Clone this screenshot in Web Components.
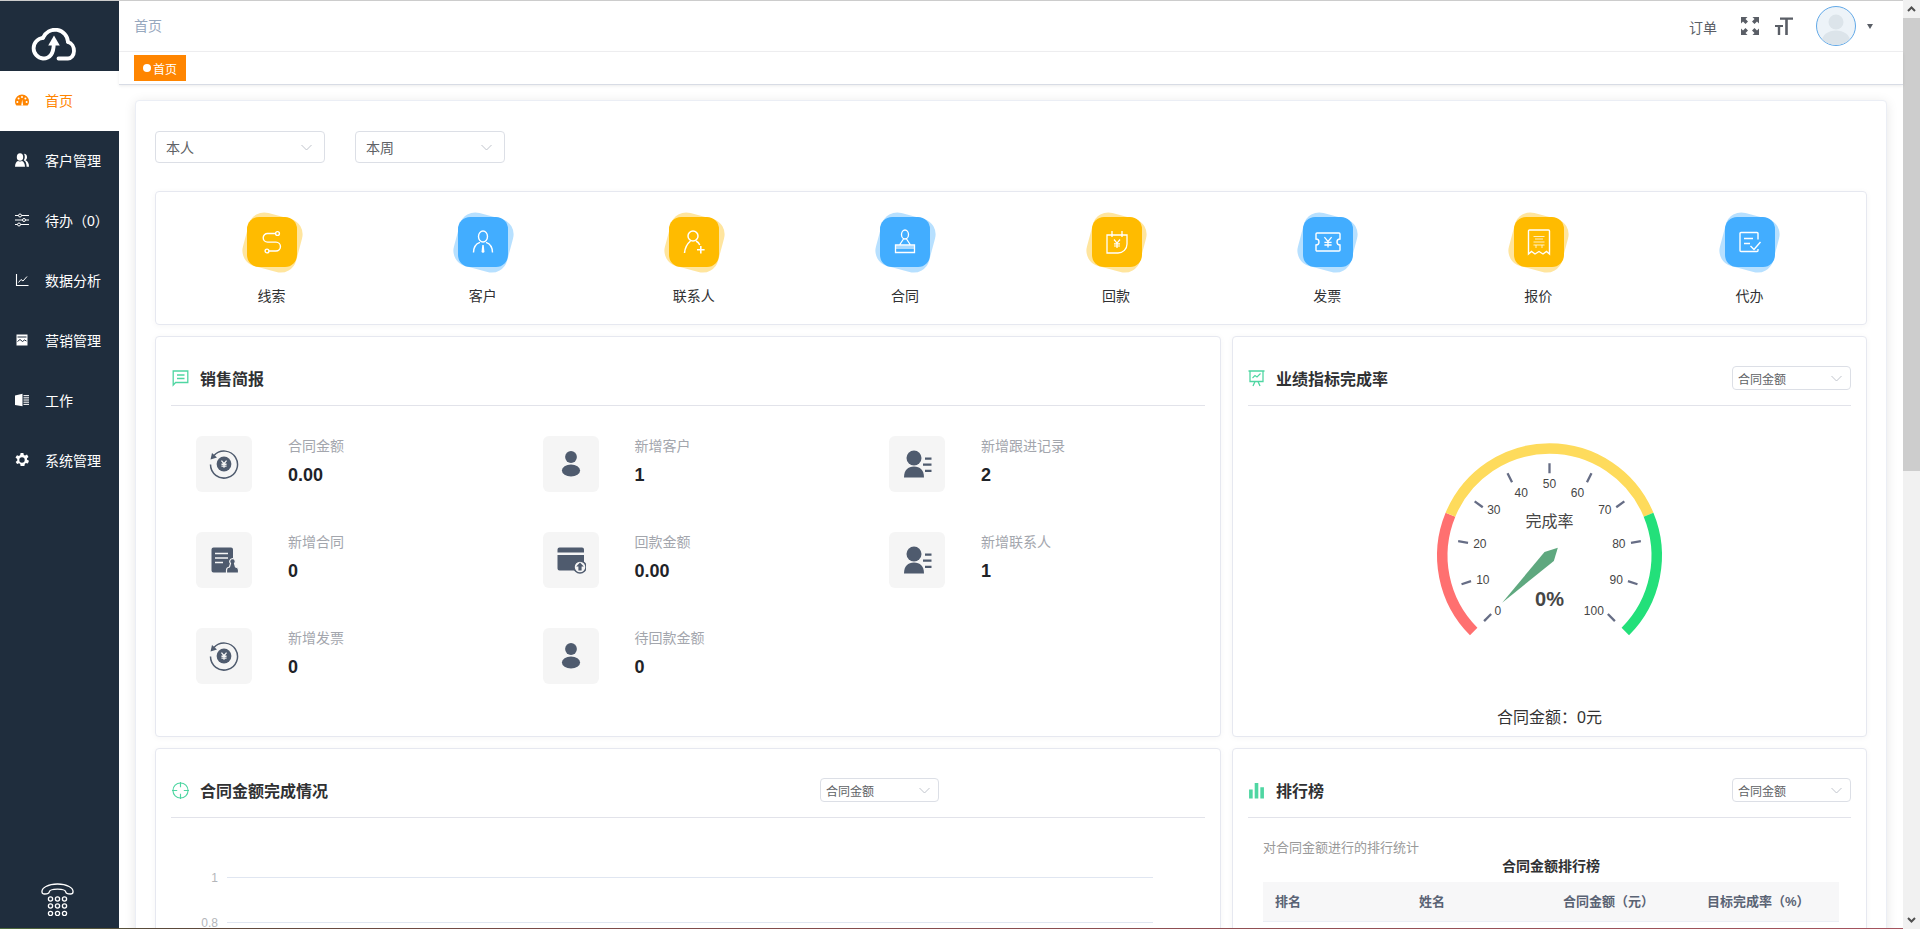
<!DOCTYPE html>
<html lang="zh-CN">
<head>
<meta charset="utf-8">
<title>首页</title>
<style>
html,body{margin:0;padding:0;height:100%;overflow:hidden;background:#fff;font-family:"Liberation Sans","Noto Sans CJK SC",sans-serif;}
</style>
</head>
<body>
<x-app></x-app>
<script>
const YEN = (cx,cy,s,c,w)=>`<path fill="none" stroke="${c}" stroke-width="${w}" d="M${cx-3*s} ${cy-4*s}L${cx} ${cy-.4*s}L${cx+3*s} ${cy-4*s}M${cx} ${cy-.4*s}V${cy+4.5*s}M${cx-3*s} ${cy+.3*s}H${cx+3*s}M${cx-3*s} ${cy+2.5*s}H${cx+3*s}"/>`;
const ICONS = {
  gauge:[14,`<path fill="currentColor" d="M7 1.5A7 7 0 0 0 0 8.5c0 1.6.6 3 1.4 4h11.2c.8-1 1.4-2.4 1.4-4a7 7 0 0 0-7-7z"/><g fill="#fff"><circle cx="7" cy="4" r="1"/><circle cx="3.6" cy="5.6" r="1"/><circle cx="10.4" cy="5.6" r="1"/><circle cx="2.4" cy="9" r="1"/><circle cx="11.6" cy="9" r="1"/><path d="M6.2 12.5L7.2 6.5 8.2 12.5z"/></g>`],
  people:[14,`<g fill="currentColor"><ellipse cx="5" cy="4" rx="3.2" ry="3.8"/><path d="M0 13.8c0-3.4 1.600-5.400 3-5.800.8.500 3.200.500 4 0 1.400.4 3 2.400 3 5.800z"/><path d="M9 .8c2 0 3 1.600 3 3.400 0 1.300-.6 2.500-1.500 3.100 2 .8 3.500 3 3.500 6.500h-2.400c0-2.900-.8-5.300-2.800-6.500 1.300-1.800 1.300-4.700.2-6.500z"/></g>`],
  sliders:[14,`<g fill="none" stroke="currentColor" stroke-width="1"><path d="M0 2.500h3.500M6.500 2.500H14M0 7h7.500M10.500 7H14M0 11.500h2.500M5.500 11.500H14"/><circle cx="5" cy="2.500" r="1.500"/><circle cx="9" cy="7" r="1.500"/><circle cx="4" cy="11.500" r="1.500"/></g>`],
  chart:[14,`<g fill="none" stroke="currentColor"><path d="M1.500 1v11.500H13.500" stroke-width="1.100"/><path d="M3.500 9.500L6 6.500l2 1.500L12 3.500" stroke-width="1"/></g>`],
  picture:[14,`<path fill="currentColor" d="M1.500 1.500h11v11h-11z"/><path fill="none" stroke="#1f2d3d" stroke-width="1" d="M2.500 4h9M2.500 8.500l2.500-2 2.500 2 2-1.500 2 1"/>`],
  book:[14,`<path fill="currentColor" d="M0 2.500L7.500.8v12.400L0 12z"/><path fill="none" stroke="currentColor" stroke-width=".9" d="M8.500 2.500H14M8.500 4.300H14M8.500 6.100H14M8.500 7.900H14M8.500 9.700H14M8.500 11.500H14"/>`],
  gear:[14,`<path fill="currentColor" fill-rule="evenodd" d="M5.600 0h2.800l.4 2 1.300.6L12 1.500l1.500 2.400L12 5.300l.1 1.500 1.900 1-1.100 2.600-2.100-.5-1 1-.4 2.100H5.600l-.4-2.100-1.100-.6-2 .8L.7 8.900l1.600-1.400-.1-1.500L.5 4.600 2 2.200l2 .8 1.200-.9zM7 4.300A2.700 2.700 0 1 0 7 9.700 2.700 2.700 0 0 0 7 4.300z"/>`],
  phone:[33,`<g fill="none" stroke="currentColor" stroke-width="1.300"><path d="M1 9c-.6-4 6-8 15.500-8S32.600 5 32 9c0 1.400-1 2-2.500 2-2.500 0-4.500-.2-4.700-1.800-.2-1.600-2-3-8.300-3s-8.100 1.400-8.300 3C8 10.800 6 11 3.500 11 2 11 1 10.400 1 9z"/><circle cx="9.500" cy="16" r="2.100"/><circle cx="16.500" cy="16" r="2.100"/><circle cx="23.500" cy="16" r="2.100"/><circle cx="9.500" cy="23" r="2.100"/><circle cx="16.500" cy="23" r="2.100"/><circle cx="23.500" cy="23" r="2.100"/><circle cx="9.500" cy="30.500" r="2.100"/><circle cx="16.500" cy="30.500" r="2.100"/><circle cx="23.500" cy="30.500" r="2.100"/></g>`],
  full:[18,`<g fill="currentColor"><path d="M0 0h6.500L4.500 2 7 4.500 4.500 7 2 4.500 0 6.500z"/><path d="M18 0h-6.500l2 2L11 4.500 13.500 7 16 4.500l2 2z"/><path d="M0 18h6.500l-2-2L7 13.500 4.500 11 2 13.500 0 11.500z"/><path d="M18 18h-6.500l2-2-2.500-2.500L13.500 11 16 13.500l2-2z"/></g>`],
  tt:[18,`<path fill="currentColor" d="M5 .5h13v2.200h-5.200V18h-2.600V2.700H5zM0 8h8v2H5.200v8H2.800v-8H0z"/>`],
  msg:[17,`<g fill="none" stroke="currentColor" stroke-width="1.300"><path d="M1.200 1h14.600v11.500H3.600l-2.400 2.600z"/><path d="M5 5h7.500M5 8.500h7.500"/></g>`],
  board:[17,`<g fill="none" stroke="currentColor" stroke-width="1.300"><path d="M.5 1h16M2 1v10.500h13V1"/><path d="M4.500 8L7 5.500l2 1.500 3.500-3.500" stroke-width="1.100"/><path d="M7 11.500L5 16M10 11.500l2 4.500"/></g>`],
  target:[18,`<g fill="none" stroke="currentColor" stroke-width="1.200"><circle cx="9" cy="9" r="8"/><path d="M9 0v5.500M9 12.500V18M0 9h5.500M12.500 9H18"/></g>`],
  bars:[16,`<g fill="currentColor"><path d="M1 7h3.400v8.500H1zM6.300 1h3.400v14.500H6.300zM11.600 5h3.400v10.500h-3.400z"/></g>`],
  q_line:[28,`<g fill="none" stroke="currentColor" stroke-width="1.400"><circle cx="19.500" cy="5.500" r="1.900"/><circle cx="9" cy="23" r="1.900"/><path d="M17.600 5.500H9.500a4.300 4.300 0 0 0 0 8.600h8.500a4.200 4.200 0 0 1 0 8.900h-7"/></g>`],
  q_cust:[28,`<g fill="none" stroke="currentColor" stroke-width="1.400"><ellipse cx="14" cy="8.500" rx="4.500" ry="5.500"/><path d="M4.500 24.500C4.500 19 7.500 15.500 11 14.300M23.500 24.500C23.500 19 20.500 15.500 17 14.300"/></g><path fill="currentColor" d="M13.300 17h1.400l.8 7-1.500 1-1.500-1z"/>`],
  q_cont:[28,`<g fill="none" stroke="currentColor" stroke-width="1.500"><circle cx="13" cy="8" r="5"/><path d="M4.500 25C5 19.500 7.500 15.500 10.500 13M16 13c1.800 1 3 2.300 3.800 4"/></g><path fill="currentColor" d="M20 18h1.600v3h3v1.600h-3v3H20v-3h-3V21h3z"/>`],
  q_stamp:[28,`<g fill="none" stroke="currentColor" stroke-width="1.300"><ellipse cx="14" cy="6.500" rx="3.500" ry="4.500"/><path d="M12.500 11L8.500 17M15.500 11L19.500 17M4.500 17h19v7.500h-19z"/></g><path fill="currentColor" fill-opacity=".55" d="M5 17.500h18v3.500H5z"/>`],
  q_cal:[28,`<g fill="none" stroke="currentColor" stroke-width="1.300"><path d="M4 7H24V16C24 21 20 25 15 25H4z"/><path d="M9 3v6M19 3v6"/></g>${YEN(14,15.500,1,'currentColor',1.200)}`],
  q_ticket:[28,`<path fill="none" stroke="currentColor" stroke-width="1.400" d="M3 5H25a1 1 0 0 1 1 1V11a3 3 0 0 0 0 6V22a1 1 0 0 1-1 1H3a1 1 0 0 1-1-1V17a3 3 0 0 0 0-6V6a1 1 0 0 1 1-1z"/>${YEN(14,14,1.200,'currentColor',1.300)}`],
  q_recp:[28,`<path fill="none" stroke="currentColor" stroke-width="1.400" d="M4.500 2H23.500a1 1 0 0 1 1 1V26l-3-2.500-3.500 2.500-4-2.500-4 2.500-3.500-2.500-3 2.500V3a1 1 0 0 1 1-1z"/><path fill="none" stroke="currentColor" stroke-opacity=".85" stroke-width=".9" d="M8.500 8.500h11M10 11h8M8.500 14h11M8.500 17h11M11 17v3M17 17v3"/>`],
  q_doc:[28,`<g fill="none" stroke="currentColor" stroke-width="1.400"><path d="M22 11.500V5.500a1 1 0 0 0-1-1H5a1 1 0 0 0-1 1V22.500a1 1 0 0 0 1 1H21a1 1 0 0 0 1-1V21"/><path d="M8 10.500h9M8 15.500h6"/><path d="M14.500 18l3.500 3.500L24.500 14"/></g>`],
  s_yen:[30,`<g fill="none" stroke="currentColor" stroke-width="1.500"><path d="M5 6.500A13.500 13.500 0 1 1 1.500 15.500"/></g><path fill="currentColor" d="M1.500 10.500L3 4 8 8.500z"/><circle cx="15" cy="15" r="7.400" fill="currentColor"/>${YEN(15,15,.85,'#f5f5f5',1.300)}`],
  s_person:[30,`<g fill="currentColor"><circle cx="15" cy="8" r="5.900"/><ellipse cx="15" cy="21.500" rx="9.100" ry="6"/></g>`],
  s_list:[30,`<g fill="currentColor"><circle cx="12" cy="9" r="7.500"/><path d="M2 28.500C2 21 6 17.500 12 17.500S22 21 22 28.500z"/><path d="M23 8.500h6.500v2.200H23zM21 14.500h8.500v2.200H21zM23 20.700h6.500v2.200H23z"/></g>`],
  s_doc:[30,`<path fill="currentColor" d="M4.500 2.500H22a2 2 0 0 1 2 2V27.500H4.500a2 2 0 0 1-2-2v-21a2 2 0 0 1 2-2z"/><path fill="none" stroke="#f5f5f5" stroke-width="1.700" d="M6 8.500h13M6 13h13M6 17.500h8"/><path fill="currentColor" stroke="#f5f5f5" stroke-width="1.200" d="M23.500 13.500a3 3 0 0 1 2 5l1 3.500c2 .3 3 1.300 3 3v3h-12v-3c0-1.700 1-2.700 3-3l1-3.500a3 3 0 0 1 2-5z"/>`],
  s_card:[30,`<path fill="currentColor" d="M3.500 2.500H26a2 2 0 0 1 2 2V7.500H1.500V4.500a2 2 0 0 1 2-2zM1.500 10H28V19a6 6 0 0 0-8 6.500H3.500a2 2 0 0 1-2-2z"/><circle cx="24" cy="22" r="6" fill="#f5f5f5" stroke="currentColor" stroke-width="1.500"/><path fill="currentColor" d="M24 17.500l3.800 4h-2.200v4h-3.200v-4h-2.200z"/>`]
};
function icon(name,size){
  const [v,body]=ICONS[name];
  return `<svg xmlns="http://www.w3.org/2000/svg" width="${size||v}" height="${size||v}" viewBox="0 0 ${v} ${v}" style="display:block;flex:none" aria-hidden="true">${body}</svg>`;
}
function define(tag,html,init){
  customElements.define(tag,class extends HTMLElement{
    constructor(){super();this.attachShadow({mode:'open'});}
    connectedCallback(){ this.shadowRoot.innerHTML=typeof html==='function'?html(this):html; if(init)init(this); }
  });
}

define('x-nav-item',el=>`<style>
:host{display:flex;align-items:center;height:60px;box-sizing:border-box;padding:0 0 2px 15px;font-size:14px;color:#fff;background:#1f2d3d;gap:16px;flex:none}
:host([active]){background:#fff;color:#ff8500}
</style>${icon(el.getAttribute('icon'),14)}<span><slot></slot></span>`);

define('x-sidebar',`<style>
:host{display:flex;flex-direction:column;width:119px;flex:none;background:#1f2d3d;height:100%}
.logo{height:70px;display:flex;align-items:flex-start;padding:27px 0 0 31px;box-sizing:border-box;flex:none}
.grow{flex:1}
.tel{color:#fff;padding:0 0 13px 41px}
</style>
<div class="logo"><svg width="46" height="33" viewBox="0 0 46 33" fill="none" stroke="#fff" stroke-width="3.800" stroke-linecap="round"><path d="M37 14A13 13 0 0 0 12 9.800"/><path d="M12 9.800A10.400 10.400 0 0 0 12 30.500C18.500 30.500 22.800 26 22.800 15"/><path d="M37 14C41 15 43 19 43 23 43 27.500 40 30.500 37 30.500H27.500"/><path fill="#fff" stroke="none" d="M23 7.500L28.800 17.500H17.200z"/></svg></div>
<slot></slot>
<div class="grow"></div>
<div class="tel">${icon('phone',33)}</div>`);

define('x-select',el=>`<style>
:host{display:inline-flex;align-items:center;justify-content:space-between;box-sizing:border-box;border:1px solid #dcdfe6;border-radius:4px;background:#fff;color:#606266;flex:none;
 height:32px;font-size:14px;padding:0 12px 0 10px;width:170px}
:host([small]){height:24px;font-size:12px;padding:0 8px 0 5px;width:119px}
svg{display:block}
</style><span><slot></slot></span><svg width="11" height="7" viewBox="0 0 11 7" fill="none" stroke="#c0c4cc"><path d="M.5 1L5.500 6 10.500 1"/></svg>`);

define('x-topbar',`<style>
:host{display:flex;align-items:center;height:51px;box-sizing:border-box;border-bottom:1px solid #f0f0f2;padding:0 30px 2px 15px;background:#fff;flex:none;font-size:14px;color:#97a8be}
.right{margin-left:auto;display:flex;align-items:center;color:#5a5e66;margin-top:2px}
.t{margin-right:24px;margin-top:1px}
.tt{margin:0 23px 0 16px}
.av{width:40px;height:40px;border-radius:50%;box-sizing:border-box;border:1px solid #62a9e8;background:#edf3f8;overflow:hidden}
.av svg{display:block}
.caret{margin-left:11px;width:0;height:0;border:3.500px solid transparent;border-top:5px solid #5a5e66;border-bottom:0}
</style>
<span>首页</span>
<div class="right">
<span class="t">订单</span>${icon('full',18)}<span class="tt">${icon('tt',18)}</span>
<div class="av"><svg width="38" height="38" viewBox="0 0 38 38"><g fill="#dce4ea"><circle cx="19" cy="15" r="7.500"/><ellipse cx="19" cy="34" rx="14" ry="10.500"/></g></svg></div>
<span class="caret"></span>
</div>`);

define('x-tagbar',`<style>
:host{display:block;height:33px;box-sizing:border-box;border-bottom:1px solid #d8dce5;background:#fff;padding:3px 0 0 15px;flex:none;box-shadow:0 1px 3px 0 rgba(0,0,0,.08);position:relative;z-index:1}
.tag{display:inline-flex;align-items:center;box-sizing:border-box;height:26px;width:52px;padding-left:9px;background:#ff8500;color:#fff;font-size:12px}
.dot{width:8px;height:8px;border-radius:50%;background:#fff;margin-right:2px}
</style><div class="tag"><span class="dot"></span>首页</div>`);

define('x-quick-item',el=>{
  const c=el.getAttribute('tone')==='blue'?'#42adff':'#ffbb00';
  return `<style>
:host{display:flex;flex-direction:column;align-items:center;padding-top:25px;font-size:14px;color:#303133}
.ic{position:relative;width:50px;height:50px;color:#fff;margin-left:1px}
.back{position:absolute;inset:-2.5px;border-radius:16px;background:${c};opacity:.38;transform:rotate(15deg)}
.front{position:absolute;inset:0;border-radius:12px;background:${c};display:flex;align-items:center;justify-content:center}
.lb{margin-top:19px;line-height:20px}
</style><div class="ic"><div class="back"></div><div class="front">${icon(el.getAttribute('icon'),28)}</div></div><div class="lb"><slot></slot></div>`;
});

define('x-stat',el=>`<style>
:host{display:flex;gap:36px;height:56px}
.box{width:56px;height:56px;border-radius:6px;background:#f5f5f5;color:#4f5b6e;display:flex;align-items:center;justify-content:center}
.lb{font-size:14px;line-height:20px;color:#a3a6ad}
.v{font-size:18px;font-weight:700;line-height:24px;margin-top:7px;color:#1f2328}
</style><div class="box">${icon(el.getAttribute('icon'),30)}</div><div><div class="lb">${el.getAttribute('label')}</div><div class="v"><slot></slot></div></div>`);

define('x-panel',el=>`<style>
:host{display:block;box-sizing:border-box;background:#fff;border:1px solid #e6e8f0;border-radius:4px;box-shadow:0 1px 6px rgba(0,0,0,.04);padding:0 15px;overflow:hidden}
.hd{display:flex;align-items:center;height:52px;padding:15px 0 1px;border-bottom:1px solid #e2e3ea;color:#4fd6a2}
.hd>svg{margin-left:var(--ind,0px)}
.tt{font-size:16px;font-weight:700;color:#303133;margin:0 0 1px 11px}
</style><div class="hd">${icon(el.getAttribute('icon'),17)}<span class="tt">${el.getAttribute('heading')}</span><slot name="action"></slot></div><slot></slot>`);

define('x-gauge',()=>{
  const cx=149.5,cy=125.7,P=(r,a)=>{a=a*Math.PI/180;return [(cx+r*Math.cos(a)).toFixed(2),(cy-r*Math.sin(a)).toFixed(2)]};
  const arc=(a,b,c)=>{const s=P(107.2,a),e=P(107.2,b);return `<path d="M${s}A107.200 107.200 0 ${a-b>180?1:0} 1 ${e}" fill="none" stroke="${c}" stroke-width="10.500"/>`};
  let ticks='';for(let i=0;i<=10;i++){const a=225-27*i,s=P(82.5,a),e=P(92.5,a);ticks+=`<path d="M${s}L${e}"/>`}
  const L=[[0,292,541],[10,247,449],[20,238,341],[30,280,238],[40,362,187],[50,447,160],[60,531,187],[70,613,238],[80,655,341],[90,647,449],[100,580,541]];
  const labels=L.map(([t,x,y])=>`<text x="${x/3+.5}" y="${y/3+1}" text-anchor="middle" dominant-baseline="middle">${t}</text>`).join('');
  const pts=[[305,518],[432,366],[472,353],[460,393]].map(([x,y])=>`${x/3+.5},${y/3}`).join(' ');
  return `<style>:host{display:block;height:300px}svg{display:block;margin:24px auto 0;font-family:"Liberation Sans","Noto Sans CJK SC",sans-serif}
  .cap{text-align:center;font-size:16px;line-height:22px;color:#333;margin-top:7px}</style>
  <svg width="300" height="270" viewBox="0 0 300 270">
  ${arc(225,157.5,'#ff7070')}${arc(157.5,22.5,'#fedb5c')}${arc(22.5,-45,'#23e07a')}
  <g stroke="#666d85" stroke-width="2.300" fill="none">${ticks}</g>
  <g font-size="12" fill="#464646">${labels}</g>
  <text x="149.500" y="92.700" text-anchor="middle" dominant-baseline="middle" font-size="16" fill="#464646">完成率</text>
  <polygon points="${pts}" fill="#5fa87f"/>
  <text x="149.500" y="171" text-anchor="middle" dominant-baseline="middle" font-size="20" font-weight="700" fill="#464646">0%</text>
  </svg><div class="cap"><slot></slot></div>`;
});

define('x-axis-chart',el=>{
  const rows=['1','0.8'].map(t=>`<div class="r"><span class="l">${t}</span><span class="g"></span></div>`).join('');
  return `<style>
  :host{display:block;padding-top:37px;padding-right:52px}
  .r{display:flex;align-items:center;height:45px}
  .l{width:47px;text-align:right;font-size:12px;color:#b4b6ba;flex:none}
  .g{flex:1;height:1px;background:#e0e6f1;margin-left:9px}
  </style>${rows}`;
});

define('x-rank-table',`<style>
:host{display:block;padding:20px 12px 0 15px}
.d{font-size:13px;line-height:20px;color:#999}
.t{font-size:14px;line-height:16px;font-weight:700;text-align:center;color:#303133}
.h{display:grid;grid-template-columns:repeat(4,144px);height:40px;align-items:center;margin-top:8px;padding-bottom:2px;background:#f7f7f8;border-bottom:1px solid #ebeef5;box-sizing:border-box;font-size:13px;font-weight:700;color:#5a6374}
.h span{padding-left:12px;white-space:nowrap}
</style>
<div class="d">对合同金额进行的排行统计</div>
<div class="t">合同金额排行榜</div>
<div class="h"><span>排名</span><span>姓名</span><span>合同金额（元）</span><span>目标完成率（%）</span></div>`);

define('x-scrollbar',`<style>
:host{display:flex;flex-direction:column;width:17px;flex:none;background:#f1f1f1;height:100%}
.b{height:18px;display:flex;align-items:center;justify-content:center;flex:none}
.th{height:453px;background:#cdcdcd;flex:none}
.gr{flex:1}
</style>
<div class="b"><svg width="9" height="6" viewBox="0 0 9 6" fill="none" stroke="#505050" stroke-width="2"><path d="M1 5L4.500 1.500 8 5"/></svg></div>
<div class="th"></div><div class="gr"></div>
<div class="b"><svg width="9" height="6" viewBox="0 0 9 6" fill="none" stroke="#505050" stroke-width="2"><path d="M1 1L4.500 4.500 8 1"/></svg></div>`);

define('x-dashboard',`<style>
:host{display:block;box-sizing:border-box;background:#fff;border:1px solid #ebeef5;border-radius:4px;box-shadow:0 2px 12px rgba(0,0,0,.1);padding:30px 19px 0}
.f{display:flex;gap:30px}
.q{display:grid;grid-template-columns:repeat(8,1fr);height:134px;box-sizing:border-box;margin-top:28px;padding:0 11px 0 10px;border:1px solid #e6e8f0;border-radius:4px;box-shadow:0 1px 6px rgba(0,0,0,.04)}
.g{display:grid;grid-template-columns:1066px 635px;column-gap:11px;row-gap:11px;margin-top:11px}
.r2{height:401px}
.st{display:grid;grid-template-columns:repeat(3,346.5px);row-gap:40px;padding:30px 0 0 25px}
.ind{--ind:1px}
</style>
<div class="f"><x-select>本人</x-select><x-select style="width:150px">本周</x-select></div>
<div class="q">
<x-quick-item icon="q_line">线索</x-quick-item>
<x-quick-item icon="q_cust" tone="blue">客户</x-quick-item>
<x-quick-item icon="q_cont">联系人</x-quick-item>
<x-quick-item icon="q_stamp" tone="blue">合同</x-quick-item>
<x-quick-item icon="q_cal">回款</x-quick-item>
<x-quick-item icon="q_ticket" tone="blue">发票</x-quick-item>
<x-quick-item icon="q_recp">报价</x-quick-item>
<x-quick-item icon="q_doc" tone="blue">代办</x-quick-item>
</div>
<div class="g">
<x-panel class="r2 ind" icon="msg" heading="销售简报"><div class="st">
<x-stat icon="s_yen" label="合同金额">0.00</x-stat>
<x-stat icon="s_person" label="新增客户">1</x-stat>
<x-stat icon="s_list" label="新增跟进记录">2</x-stat>
<x-stat icon="s_doc" label="新增合同">0</x-stat>
<x-stat icon="s_card" label="回款金额">0.00</x-stat>
<x-stat icon="s_list" label="新增联系人">1</x-stat>
<x-stat icon="s_yen" label="新增发票">0</x-stat>
<x-stat icon="s_person" label="待回款金额">0</x-stat>
</div></x-panel>
<x-panel class="r2" icon="board" heading="业绩指标完成率"><x-select small slot="action" style="margin-left:auto">合同金额</x-select><x-gauge>合同金额：0元</x-gauge></x-panel>
<x-panel class="ind" style="height:300px" icon="target" heading="合同金额完成情况"><x-select small slot="action" style="margin-left:492px">合同金额</x-select><x-axis-chart></x-axis-chart></x-panel>
<x-panel style="height:300px" icon="bars" heading="排行榜"><x-select small slot="action" style="margin-left:auto">合同金额</x-select><x-rank-table></x-rank-table></x-panel>
</div>`);

define('x-app',`<style>
:host{display:flex;height:100vh;overflow:hidden;font-family:"Liberation Sans","Noto Sans CJK SC",sans-serif}
.left{flex:1;min-width:0;display:flex;flex-direction:column;border-top:1px solid #ccc;box-sizing:border-box;position:relative;height:100%}
.row{flex:1;display:flex;min-height:0}
.col{flex:1;min-width:0;display:flex;flex-direction:column}
.main{flex:1;min-height:0;overflow:hidden;padding:15px 16px 0}
.edge{position:absolute;left:0;right:0;bottom:0;height:1px;background:linear-gradient(90deg,#4c6a3c 0,#5a4a3a 8%,#7d4a48 30%,#a5545e 100%)}
</style>
<div class="left">
<div class="row">
<x-sidebar>
<x-nav-item icon="gauge" active>首页</x-nav-item>
<x-nav-item icon="people">客户管理</x-nav-item>
<x-nav-item icon="sliders">待办（0）</x-nav-item>
<x-nav-item icon="chart">数据分析</x-nav-item>
<x-nav-item icon="picture">营销管理</x-nav-item>
<x-nav-item icon="book">工作</x-nav-item>
<x-nav-item icon="gear">系统管理</x-nav-item>
</x-sidebar>
<div class="col">
<x-topbar></x-topbar>
<x-tagbar></x-tagbar>
<div class="main"><x-dashboard></x-dashboard></div>
</div>
</div>
<div class="edge"></div>
</div>
<x-scrollbar></x-scrollbar>`);
</script>
</body>
</html>
